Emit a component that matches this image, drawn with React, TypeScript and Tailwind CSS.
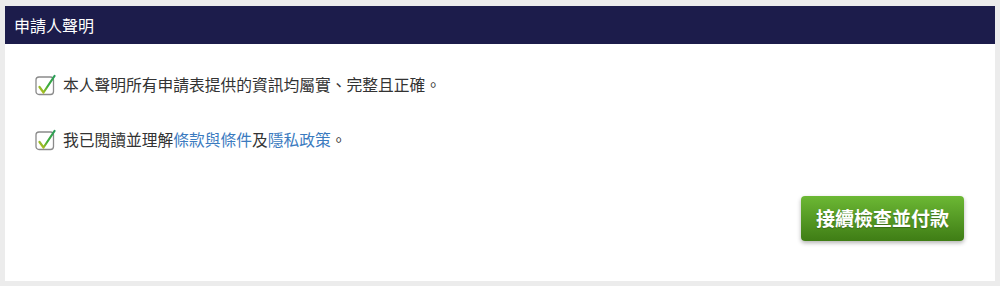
import React from 'react';

function CheckIcon() {
  return (
    <svg width="21" height="22" viewBox="0 0 21 22" className="shrink-0">
      <defs>
        <linearGradient id="chk" x1="0" y1="1" x2="1" y2="0">
          <stop offset="0" stopColor="#c9c21a" />
          <stop offset="0.45" stopColor="#3fae3a" />
          <stop offset="1" stopColor="#2a9d5a" />
        </linearGradient>
      </defs>
      <rect x="1" y="3" width="17.5" height="17.5" rx="3" fill="#fff" stroke="#8a8a8a" strokeWidth="1.3" />
      <path d="M4.5 13 L8.5 18.5 L19.5 2" fill="none" stroke="url(#chk)" strokeWidth="2.2" strokeLinecap="round" strokeLinejoin="round" />
    </svg>
  );
}

export default function App() {
  return (
    <div className="min-h-[286px] bg-[#ececec] pt-[6px] px-[5px] pb-[5px] font-['Noto_Sans_CJK_TC','Noto_Sans',sans-serif]">
      <div className="bg-white">
        <div className="h-[38px] bg-[#1c1c4b] flex items-center px-[9px]">
          <span className="text-white text-[16px]">申請人聲明</span>
        </div>
        <div className="px-[30px] pt-[30px] pb-[40px]">
          <div className="flex items-center gap-[7px] h-[22px] text-[15.75px] text-[#333]">
            <CheckIcon />
            <span>本人聲明所有申請表提供的資訊均屬實、完整且正確。</span>
          </div>
          <div className="flex items-center gap-[7px] h-[22px] mt-[33px] text-[15.75px] text-[#333]">
            <CheckIcon />
            <span>
              我已閱讀並理解<a className="text-[#3b7bbf]">條款與條件</a>及<a className="text-[#3b7bbf]">隱私政策</a>。
            </span>
          </div>
          <div className="flex justify-end mt-[45px] pr-[1px]">
            <button className="w-[163px] h-[45px] rounded-[4px] bg-gradient-to-b from-[#6cb834] to-[#3f7d15] text-white text-[19px] font-bold shadow-[0_2px_4px_rgba(0,0,0,0.3)] [text-shadow:0_1px_1px_rgba(0,0,0,0.25)]">
              接續檢查並付款
            </button>
          </div>
        </div>
      </div>
    </div>
  );
}
